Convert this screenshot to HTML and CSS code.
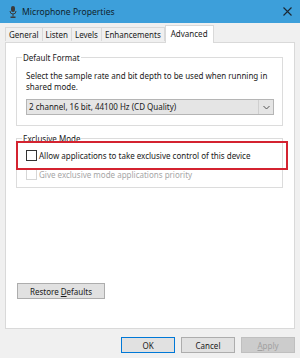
FILE: index.html
```html
<!DOCTYPE html>
<html lang="en">
<head>
  <meta charset="UTF-8">
  <title>Microphone Properties</title>
  <link rel="stylesheet" href="styles.css">
</head>
<body>

<div class="window">
  <div class="titlebar">
    <svg class="title-icon" width="8" height="12" viewBox="0 0 8 12">
      <rect x="2" y="0" width="4" height="6" rx="2" fill="#3b3b3b"/>
      <path d="M1 5 Q1 8 4 8 Q7 8 7 5" fill="none" stroke="#3b3b3b" stroke-width="1"/>
      <rect x="3.5" y="8" width="1" height="2.5" fill="#3b3b3b"/>
      <rect x="1.5" y="10.5" width="5" height="1.5" fill="#3b3b3b"/>
    </svg>
    <span class="title">Microphone Properties</span>
    <svg class="close" width="9" height="9" viewBox="0 0 9 9">
      <path d="M0.5 0.5 L8.5 8.5 M8.5 0.5 L0.5 8.5" stroke="#1b2733" stroke-width="1.1"/>
    </svg>
  </div>

  <div class="tabs">
    <span class="tab">General</span>
    <span class="tab">Listen</span>
    <span class="tab">Levels</span>
    <span class="tab">Enhancements</span>
    <span class="tab active">Advanced</span>
  </div>

  <div class="panel">
    <fieldset class="group format">
      <legend>Default Format</legend>
      <p class="hint">Select the sample rate and bit depth to be used when running in shared mode.</p>
      <div class="combo">
        <span class="combo-text">2 channel, 16 bit, 44100 Hz (CD Quality)</span>
        <span class="combo-arrow">
          <svg width="7" height="5" viewBox="0 0 7 5"><path d="M0.5 1 L3.5 4 L6.5 1" fill="none" stroke="#555" stroke-width="1"/></svg>
        </span>
      </div>
    </fieldset>

    <fieldset class="group exclusive">
      <legend>Exclusive Mode</legend>
      <div class="highlight">
        <label class="check"><span class="box"></span>Allow applications to take exclusive control of this device</label>
      </div>
      <label class="check disabled"><span class="box"></span>Give exclusive mode applications priority</label>
    </fieldset>

    <div class="spacer"></div>

    <button type="button" class="btn restore">Restore <u>D</u>efaults</button>
  </div>

  <div class="footer">
    <button type="button" class="btn ok">OK</button>
    <button type="button" class="btn">Cancel</button>
    <button type="button" class="btn off"><u>A</u>pply</button>
  </div>
</div>

</body>
</html>
```

FILE: styles.css
```css
* {
  box-sizing: border-box;
}
body {
  margin: 0;
  font-family: "Noto Sans", "Open Sans", sans-serif;
  font-size: 8px;
  color: #1a1a1a;
  background: #f0f0f0;
}
.window {
  width: 300px;
  height: 358px;
  display: flex;
  flex-direction: column;
}
.titlebar {
  height: 23px;
  background: #3d9fda;
  display: flex;
  align-items: center;
  padding: 0 8px 0 9px;
}
.title-icon {
  margin-right: 5px;
}
.title {
  font-size: 8.6px;
  color: #0f1f2e;
  flex: 1;
}
.tabs {
  display: flex;
  align-items: flex-end;
  padding: 0 0 0 5px;
  margin-top: 2px;
  height: 17px;
  position: relative;
  z-index: 1;
}
.tab {
  height: 14px;
  line-height: 13px;
  padding: 0 3px;
  border: 1px solid #d9d9d9;
  border-bottom: none;
  background: #f0f0f0;
  margin-right: -1px;
  margin-bottom: 1px;
}
.tab.active {
  height: 18px;
  line-height: 15px;
  background: #fff;
  padding: 0 5px;
  margin: 0 0 -1px 1px;
}
.panel {
  margin: 0 5px;
  height: 287px;
  background: #fff;
  border: 1px solid #d9d9d9;
  display: flex;
  flex-direction: column;
  padding: 9px 11px 0 10px;
}
.group {
  margin: 0;
  padding: 0 0 0 9px;
  border: 1px solid #dcdcdc;
  min-width: 0;
}
.group legend {
  padding: 0 1px;
  margin-left: -4px;
  line-height: 11px;
}
.hint {
  margin: 7px 0 0;
  line-height: 11px;
  padding-right: 8px;
}
.combo {
  display: flex;
  height: 16px;
  margin: 7px 8px 10px 0;
  border: 1px solid #b5b5b5;
  background: #e5e5e5;
}
.combo-text {
  flex: 1;
  line-height: 14px;
  padding-left: 2px;
}
.combo-arrow {
  width: 15px;
  border-left: 1px solid #cfcfcf;
  display: flex;
  align-items: center;
  justify-content: center;
}
.exclusive {
  margin-top: 7px;
  height: 55px;
}
.highlight {
  position: relative;
  z-index: 1;
  margin: -3px -6px 0 -10px;
  border: 2px solid #d42330;
  height: 29px;
  padding: 7px 0 0 8px;
}
.check {
  display: flex;
  align-items: center;
  line-height: 11px;
}
.box {
  width: 11px;
  height: 11px;
  border: 1px solid #333;
  background: #fff;
  margin-right: 2px;
}
.check.disabled {
  color: #a6a6a6;
  margin-top: -1px;
}
.check.disabled .box {
  border-color: #d6d6d6;
}
.spacer {
  flex: 1;
}
.btn {
  font-family: inherit;
  font-size: 8px;
  color: #1a1a1a;
  height: 16px;
  padding: 0;
  background: #e1e1e1;
  border: 1px solid #adadad;
  border-radius: 0;
}
.restore {
  width: 88px;
  margin: 0 0 29px 1px;
}
.footer {
  display: flex;
  justify-content: flex-end;
  gap: 6px;
  padding: 8px 5px 0 0;
}
.footer .btn {
  width: 54px;
}
.btn.ok {
  border-color: #0078d7;
}
.btn.off {
  background: #cccccc;
  border-color: #bfbfbf;
  color: #a0a0a0;
}
```
